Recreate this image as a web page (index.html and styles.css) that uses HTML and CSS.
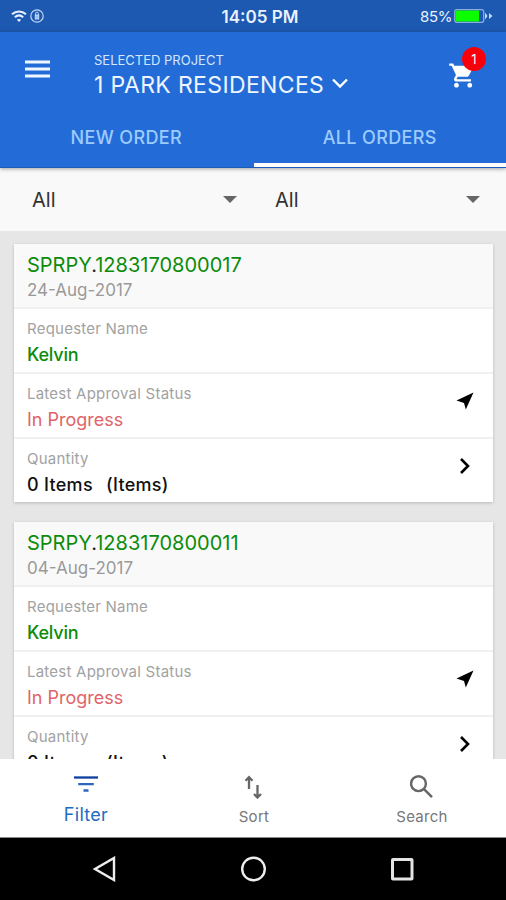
FILE: index.html
```html
<!DOCTYPE html>
<html lang="en">
<head>
    <meta charset="UTF-8">
    <meta name="viewport" content="width=device-width, initial-scale=1.0">
    <title>All Orders</title>
    <link rel="stylesheet" href="styles.css">
</head>
<body>
    <div class="status-bar">
        <div class="status-left">
            <svg width="16" height="12" viewBox="0 0 16 12" fill="none" stroke="#e6f0ff" stroke-width="2">
                <path d="M1 4.3C5 .6 11 .6 15 4.3M3.8 7.2c2.5-2.2 5.900-2.200 8.400 0"/>
                <path d="M8 12L5.900 9.700c1.200-1 3-1 4.200 0z" fill="#e6f0ff" stroke="none"/>
            </svg>
            <svg width="14" height="14" viewBox="0 0 14 14" fill="none" stroke="#c3d8f6">
                <circle cx="7" cy="7" r="6.200" stroke-width="1.200"/>
                <rect x="5.300" y="6" width="3.400" height="4" fill="#9dbdec"/>
                <path d="M5.600 6V4.500a1.400 1.400 0 0 1 2.800 0V6"/>
            </svg>
        </div>
        <span class="time">14:05 PM</span>
        <div class="status-right">
            <span class="percent">85%</span>
            <svg width="39" height="14" viewBox="0 0 39 14">
                <rect x=".7" y=".7" width="29" height="12.600" rx="2" fill="none" stroke="#8eb0dc" stroke-width="1.200"/>
                <rect x="1.500" y="1.500" width="23.500" height="11" fill="#0bff00"/>
                <path d="M31 3.500l2.500 3.500-2.500 3.500zM35 4l3.500 3-3.500 3z" fill="#c3d8f6"/>
            </svg>
        </div>
    </div>

    <header class="header">
        <div class="toolbar">
            <button class="icon-button menu" aria-label="Menu">
                <svg width="26" height="20" viewBox="0 0 26 20" stroke="#f2f7ff" stroke-width="3"><path d="M0 3h25M0 10h25M0 17h25"/></svg>
            </button>
            <div class="project">
                <div class="project-label">SELECTED PROJECT</div>
                <div class="project-name">
                    <span>1 PARK RESIDENCES</span>
                    <svg width="16" height="11" viewBox="0 0 16 11" fill="none" stroke="#fff" stroke-width="2.400"><path d="M1 1.500l7 7 7-7"/></svg>
                </div>
            </div>
            <button class="icon-button cart" aria-label="Cart">
                <svg width="29" height="29" viewBox="0 0 24 24" fill="#fff"><path d="M7 18c-1.100 0-1.990.9-1.990 2S5.900 22 7 22s2-.9 2-2-.9-2-2-2zM1 2v2h2l3.600 7.590-1.350 2.450c-.16.28-.25.61-.25.96 0 1.100.9 2 2 2h12v-2H7.420c-.14 0-.25-.11-.25-.25l.03-.12.9-1.630h7.450c.75 0 1.410-.41 1.750-1.030l3.580-6.490A1 1 0 0 0 20 4H5.210l-.94-2H1zm17 16c-1.100 0-1.990.9-1.990 2s.89 2 1.990 2 2-.9 2-2-.9-2-2-2z"/></svg>
                <span class="badge">1</span>
            </button>
        </div>
        <nav class="tabs">
            <a class="tab"><span>NEW ORDER</span></a>
            <a class="tab active"><span>ALL ORDERS</span></a>
        </nav>
    </header>

    <div class="filters">
        <div class="select"><span>All</span><i class="caret"></i></div>
        <div class="select"><span>All</span><i class="caret"></i></div>
    </div>

    <main class="orders">
        <section class="card">
            <div class="card-header">
                <div class="order-id">SPRPY<span class="dot">.</span>1283170800017</div>
                <div class="date">24-Aug-2017</div>
            </div>
            <div class="row">
                <div>
                    <div class="label">Requester Name</div>
                    <div class="value name">Kelvin</div>
                </div>
            </div>
            <div class="row">
                <div>
                    <div class="label">Latest Approval Status</div>
                    <div class="value progress">In Progress</div>
                </div>
                <svg class="row-icon" width="18" height="18" viewBox="0 0 18 18"><path d="M17.500.5L9.800 17.500 8 11 .5 8.500z"/></svg>
            </div>
            <div class="row">
                <div>
                    <div class="label">Quantity</div>
                    <div class="value quantity"><span>0 Items</span><span>(Items)</span></div>
                </div>
                <svg class="row-icon" width="18" height="18" viewBox="0 0 18 18" fill="none" stroke="#000" stroke-width="2.600"><path d="M5 2l7 7-7 7"/></svg>
            </div>
        </section>

        <section class="card">
            <div class="card-header">
                <div class="order-id">SPRPY<span class="dot">.</span>1283170800011</div>
                <div class="date">04-Aug-2017</div>
            </div>
            <div class="row">
                <div>
                    <div class="label">Requester Name</div>
                    <div class="value name">Kelvin</div>
                </div>
            </div>
            <div class="row">
                <div>
                    <div class="label">Latest Approval Status</div>
                    <div class="value progress">In Progress</div>
                </div>
                <svg class="row-icon" width="18" height="18" viewBox="0 0 18 18"><path d="M17.500.5L9.800 17.500 8 11 .5 8.500z"/></svg>
            </div>
            <div class="row">
                <div>
                    <div class="label">Quantity</div>
                    <div class="value quantity"><span>0 Items</span><span>(Items)</span></div>
                </div>
                <svg class="row-icon" width="18" height="18" viewBox="0 0 18 18" fill="none" stroke="#000" stroke-width="2.600"><path d="M5 2l7 7-7 7"/></svg>
            </div>
        </section>
    </main>

    <nav class="bottom-nav">
        <a class="nav-item active">
            <svg width="24" height="24" viewBox="0 0 24 24" fill="none" stroke-width="2.300"><path d="M0 2.500h24" stroke="#0d3f9f"/><path d="M4.200 9.200h15.600M9.500 15.500h5" stroke="#2b68bd"/></svg>
            <span>Filter</span>
        </a>
        <a class="nav-item">
            <svg width="24" height="24" viewBox="0 0 24 24" fill="none" stroke="#666" stroke-width="2.300"><path d="M7 14V2.500M3.500 5.700L7 2.200l3.500 3.500M15.500 10V22.500M12 19l3.500 3.500 3.500-3.500"/></svg>
            <span>Sort</span>
        </a>
        <a class="nav-item">
            <svg width="24" height="24" viewBox="0 0 24 24" fill="none" stroke="#666" stroke-width="2.400"><circle cx="8.500" cy="8.700" r="7.400"/><path d="M14 14.200l8 8"/></svg>
            <span>Search</span>
        </a>
    </nav>

    <div class="system-nav">
        <svg width="24" height="26" viewBox="0 0 24 26" fill="none" stroke="#eee" stroke-width="2.400"><path d="M22 2v22L3 13z"/></svg>
        <svg width="26" height="26" viewBox="0 0 26 26" fill="none" stroke="#eee" stroke-width="2.400"><circle cx="13.500" cy="13" r="11.300"/></svg>
        <svg width="24" height="24" viewBox="0 0 24 24" fill="none" stroke="#e4e4e4" stroke-width="3"><rect x="2.500" y="2.500" width="19.500" height="19.500" rx=".5"/></svg>
    </div>
</body>
</html>
```
FILE: styles.css
```css
* {
    box-sizing: border-box;
}

body {
    margin: 0;
    height: 900px;
    display: flex;
    flex-direction: column;
    overflow: hidden;
    font-family: Inter, sans-serif;
    background: #e6e6e6;
}

.status-bar {
    height: 32px;
    flex: none;
    display: grid;
    grid-template-columns: 1fr auto 1fr;
    align-items: center;
    padding: 0 13px 0 11px;
    background: #1d59b1;
    color: #e9f2ff;
}

.status-left,
.status-right {
    display: flex;
    align-items: center;
    gap: 3px;
}

.status-right {
    justify-content: flex-end;
    gap: 2px;
}

.time {
    font-size: 17px;
    font-weight: 600;
    margin-left: 16px;
    padding-top: 1px;
}

.percent {
    font-size: 15px;
    letter-spacing: -0.4px;
}

.header {
    height: 136px;
    flex: none;
    position: relative;
    background: #236cd7;
    border-bottom: 1px solid #1c5cb8;
    box-shadow: 0 1px 4px rgba(0, 0, 0, 0.35);
}

.toolbar {
    height: 76px;
    display: flex;
    padding: 0 29px 0 25px;
}

.icon-button {
    position: relative;
    padding: 0;
    border: 0;
    background: none;
}

.icon-button svg {
    display: block;
}

.menu {
    height: 74px;
}

.project {
    flex: 1;
    margin-left: 43px;
    padding-top: 20px;
    color: #d5e6ff;
}

.project-label {
    font-size: 13px;
    line-height: 16px;
}

.project-name {
    display: flex;
    align-items: center;
    gap: 8px;
    font-size: 23px;
    line-height: 34px;
    letter-spacing: 0.36px;
    color: #eef5ff;
}

.project-name svg {
    margin-bottom: 3px;
}

.cart {
    height: 86px;
}

.badge {
    position: absolute;
    left: 14px;
    top: 15px;
    width: 24px;
    height: 24px;
    border-radius: 50%;
    background: #f7000b;
    color: #fff;
    font: 13px/25px Inter, sans-serif;
    text-align: center;
}

.tabs {
    height: 59px;
    display: flex;
}

.tab {
    flex: 1;
    text-align: center;
    font-size: 18px;
    font-weight: 500;
    line-height: 60px;
    letter-spacing: 0.35px;
    color: #9ccbff;
}

.tab.active {
    margin-left: 1px;
    border-bottom: 4px solid #fff;
}

.filters {
    height: 63px;
    flex: none;
    display: flex;
    gap: 38px;
    padding: 0 26px 0 32px;
    background: #f9f9f9;
}

.select {
    flex: 0 0 205px;
    display: flex;
    align-items: center;
    justify-content: space-between;
    font-size: 20px;
    color: #333;
}

.caret {
    border: 7px solid transparent;
    border-top-color: #666;
    border-bottom: 0;
}

.orders {
    flex: 1;
    min-height: 0;
    overflow: hidden;
    padding: 13px 13px 0 14px;
}

.card {
    margin-bottom: 20px;
    background: #fff;
    box-shadow: 0 1px 3px rgba(0, 0, 0, 0.2);
}

.card-header {
    height: 62.500px;
    padding: 8px 13px 0;
    background: #f9f9f9;
}

.order-id {
    font-size: 20px;
    line-height: 26px;
    color: #0b8c0b;
}

.dot {
    color: #222;
}

.date {
    font-size: 17px;
    line-height: 24px;
    color: #999;
}

.row {
    height: 65.300px;
    display: flex;
    justify-content: space-between;
    padding: 8px 19px 0 13px;
    border-top: 2px solid #f0f0f0;
}

.row-icon {
    margin-top: 10px;
}

.label {
    font-size: 15px;
    line-height: 24px;
    letter-spacing: 0.23px;
    color: #a2a2a2;
}

.value {
    font-size: 18px;
    line-height: 28px;
}

.name {
    font-weight: 500;
    letter-spacing: -0.2px;
    color: #0b8c0b;
}

.progress {
    color: #e06468;
}

.quantity {
    display: flex;
    gap: 13px;
    font-weight: 500;
    letter-spacing: 0.3px;
    color: #111;
}

.bottom-nav {
    height: 79px;
    flex: none;
    display: flex;
    background: #fff;
    border-bottom: 1px solid #888;
}

.nav-item {
    flex: 1;
    display: flex;
    flex-direction: column;
    align-items: center;
    padding-top: 16px;
    font-size: 15px;
    line-height: 36px;
    letter-spacing: 0.3px;
    color: #777;
}

.nav-item.active {
    padding-left: 2px;
    font-size: 18px;
    line-height: 32px;
    color: #236bc0;
}

.system-nav {
    height: 62px;
    flex: none;
    display: flex;
    align-items: center;
    justify-content: space-between;
    padding: 0 92px;
    background: #000;
}
```
